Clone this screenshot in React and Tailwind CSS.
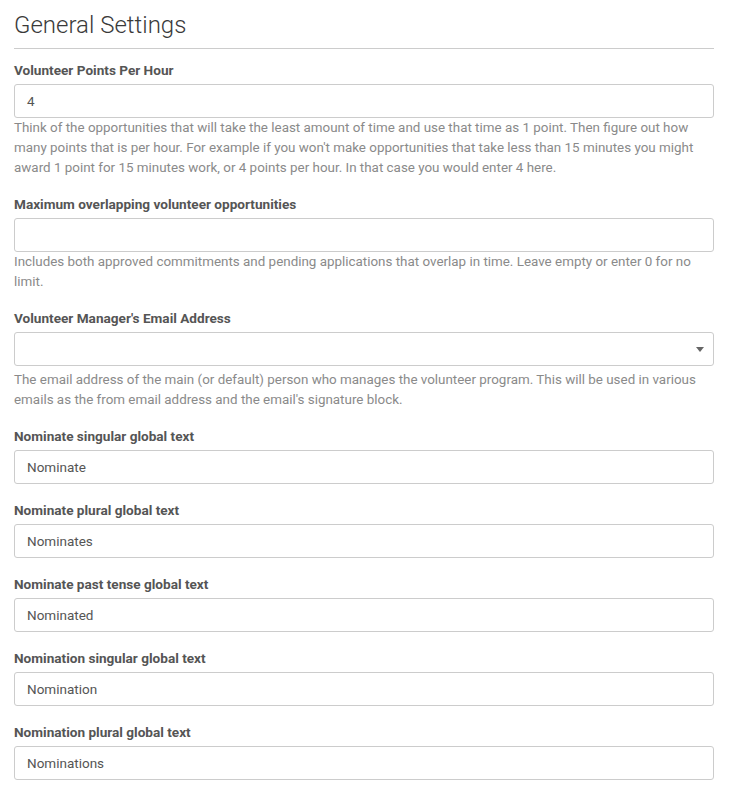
export default function App() {
  const font = { fontFamily: "Roboto, 'Noto Sans', sans-serif" };
  const Label = ({ children }) => (
    <label className="block h-[20px] leading-[20px] text-[13.6px] font-bold text-[#555] mb-[4px]">{children}</label>
  );
  const Input = ({ value }) => (
    <div className="h-[34px] w-full border border-[#ccc] rounded-[3px] bg-white flex items-center px-[12px] text-[13.5px] text-[#555]">
      {value}
    </div>
  );
  const Help = ({ children, mt = "mt-0" }) => (
    <p className={`${mt} text-[13.4px] leading-[20px] text-[#8a8a8a] whitespace-nowrap`}>{children}</p>
  );
  return (
    <div className="bg-white min-h-[797px] pl-[14px] pt-[9px]" style={font}>
      <div className="w-[700px]">
        <h1 className="text-[24px] font-light leading-[32px] text-[#3a3a3a] pb-[7px] border-b border-[#ccc]">General Settings</h1>
        <div className="pt-[11px]">
          <div className="mb-[16px]">
            <Label>Volunteer Points Per Hour</Label>
            <Input value="4" />
            <Help>
              Think of the opportunities that will take the least amount of time and use that time as 1 point. Then figure out how<br />
              many points that is per hour. For example if you won't make opportunities that take less than 15 minutes you might<br />
              award 1 point for 15 minutes work, or 4 points per hour. In that case you would enter 4 here.
            </Help>
          </div>
          <div className="mb-[16px]">
            <Label>Maximum overlapping volunteer opportunities</Label>
            <Input value="" />
            <Help>
              Includes both approved commitments and pending applications that overlap in time. Leave empty or enter 0 for no<br />
              limit.
            </Help>
          </div>
          <div className="mb-[16px]">
            <Label>Volunteer Manager's Email Address</Label>
            <div className="h-[34px] w-full border border-[#ccc] rounded-[3px] bg-white flex items-center justify-end pr-[9px]">
              <svg width="8" height="5" viewBox="0 0 8 5"><path d="M0 0 L8 0 L4 5 Z" fill="#666" /></svg>
            </div>
            <Help mt="mt-[4px]">
              The email address of the main (or default) person who manages the volunteer program. This will be used in various<br />
              emails as the from email address and the email's signature block.
            </Help>
          </div>
          {[
            ["Nominate singular global text", "Nominate"],
            ["Nominate plural global text", "Nominates"],
            ["Nominate past tense global text", "Nominated"],
            ["Nomination singular global text", "Nomination"],
            ["Nomination plural global text", "Nominations"],
          ].map(([l, v]) => (
            <div key={l} className="mb-[16px]">
              <Label>{l}</Label>
              <Input value={v} />
            </div>
          ))}
        </div>
      </div>
    </div>
  );
}
